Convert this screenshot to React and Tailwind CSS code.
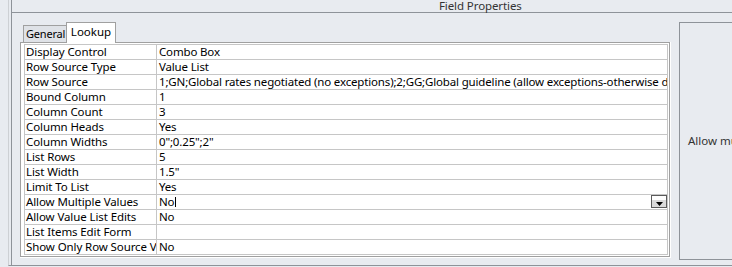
const rows = [
  ["Display Control", "Combo Box"],
  ["Row Source Type", "Value List"],
  [
    "Row Source",
    "1;GN;Global rates negotiated (no exceptions);2;GG;Global guideline (allow exceptions-otherwise default to GN)",
  ],
  ["Bound Column", "1"],
  ["Column Count", "3"],
  ["Column Heads", "Yes"],
  ["Column Widths", '0";0.25";2"'],
  ["List Rows", "5"],
  ["List Width", '1.5"'],
  ["Limit To List", "Yes"],
  ["Allow Multiple Values", "No", true],
  ["Allow Value List Edits", "No"],
  ["List Items Edit Form", ""],
  ["Show Only Row Source Values", "No"],
];

function Row({ label, value, active }) {
  return (
    <div className="flex h-[15px] border-b border-[#c6c6c6]">
      <div className="w-[132px] shrink-0 border-r border-[#c6c6c6] pl-[1px] overflow-hidden whitespace-nowrap text-[11.5px] leading-[14px] tracking-[-0.1px]">
        {label}
      </div>
      <div className="relative w-[511px] shrink-0 border-r border-[#c6c6c6] pl-[2px] overflow-hidden whitespace-nowrap text-[11.5px] leading-[14px] tracking-[-0.16px]">
        {value}
        {active && (
          <>
            <span className="inline-block align-top mt-[2px] ml-[1px] h-[10px] w-[1px] bg-black" />
            <div className="absolute right-0 top-0 h-[13px] w-[16px] border border-[#5b5b5b] bg-[#f4f4f4] flex flex-col">
              <div className="h-[4px] bg-white" />
              <div className="flex-1 bg-[#dadada] flex items-start justify-center pt-[2px]">
                <svg width="7" height="4" viewBox="0 0 7 4">
                  <polygon points="0,0 7,0 3.5,4" fill="#000" />
                </svg>
              </div>
            </div>
          </>
        )}
      </div>
    </div>
  );
}

export default function App() {
  return (
    <div className="w-[732px] h-[267px] bg-[#e8ebf0] overflow-hidden flex text-black font-['Noto_Sans',sans-serif]">
      <div className="w-[8px] shrink-0" />
      <div className="w-[724px] h-[266px] shrink-0 border-l border-b border-l-[#cdd0d4] border-b-[#8e9399] pl-[2px]">
        <div className="h-full border-l border-[#8e9399] flex flex-col">
          <div className="h-[13px] shrink-0 border-b border-[#8e9399] pl-[427px] text-[11.5px] leading-[12px] tracking-[-0.1px] text-[#333]">
            Field Properties
          </div>
          <div className="flex flex-1 pt-[9px] pl-[8px]">
            <div className="w-[651px] shrink-0 flex flex-col">
              <div className="relative z-10 flex h-[20px] items-end pl-[3px]">
                <div className="h-[17px] w-[43px] border-l border-t border-[#a0a0a0] bg-[#dfe2e7] pl-[2px] text-[11px] leading-[16px] tracking-[-0.2px] whitespace-nowrap overflow-hidden">
                  General
                </div>
                <div className="-mb-[1px] h-[21px] w-[50px] border-l border-t border-r border-[#a0a0a0] bg-white text-center text-[11.5px] leading-[18px]">
                  Lookup
                </div>
              </div>
              <div className="border-r border-b border-white">
                <div className="border border-[#a0a0a0] bg-white pl-[3px] pt-[1px] pr-[1px] pb-[1px]">
                  <div className="border-l border-t border-[#c6c6c6]">
                    {rows.map((r) => (
                      <Row key={r[0]} label={r[0]} value={r[1]} active={r[2]} />
                    ))}
                  </div>
                </div>
              </div>
            </div>
            <div className="ml-[8px] h-[238px] w-[120px] shrink-0 border-l border-t border-b border-[#8e9399] flex items-center pl-[8px] whitespace-nowrap overflow-hidden text-[11.5px] text-[#333]">
              Allow multiple values for the lookup?
            </div>
          </div>
        </div>
      </div>
    </div>
  );
}
